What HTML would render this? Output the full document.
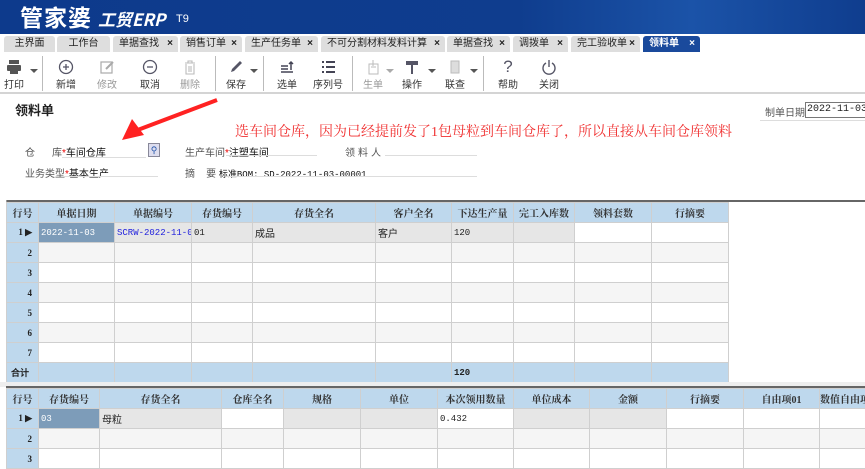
<!DOCTYPE html>
<html><head><meta charset="utf-8"><style>
*{margin:0;padding:0;box-sizing:border-box}
body{width:865px;height:452px;overflow:hidden;background:#fff;font-family:"Liberation Sans","Noto Sans CJK SC",sans-serif;font-size:11px;color:#222;position:relative}
.a{position:absolute;white-space:nowrap}
#hdr{left:0;top:0;width:865px;height:34px;background:linear-gradient(90deg,#0d3a8c 0%,#0f3d8e 60%,#1b53a8 80%,#0f3d8e 100%)}
#tabs{left:0;top:34px;width:865px;height:18px;background:#fff}
.tab{position:absolute;top:2px;height:16px;background:#dedede;border-radius:3px 3px 0 0;font-size:10px;line-height:16px;color:#222;padding-left:6px;white-space:nowrap}
.tab b{position:absolute;right:5px;top:0;font-weight:bold;font-size:10px}
.tb{position:absolute;top:57px;text-align:center;font-size:10px;color:#333;white-space:nowrap}
.tb .i{height:20px;display:flex;align-items:center;justify-content:center}
.tb .l{margin-top:3px;line-height:12px}
.sep{position:absolute;top:56px;width:1px;height:35px;background:#bbb}
.dd{position:absolute;top:69px;width:0;height:0;border-left:4px solid transparent;border-right:4px solid transparent;border-top:4px solid #555}
table{border-collapse:collapse;table-layout:fixed;position:absolute}
td{border:1px solid #cfcfcf;height:20px;font-size:9px;padding:0 2px;overflow:hidden;white-space:nowrap;font-family:"Liberation Mono","Noto Sans CJK SC",monospace}
th{background:#bed8ed;border:1px solid #cfcfcf;height:20px;font-weight:bold;color:#333;font-size:10px;font-family:"Liberation Serif","Noto Serif CJK SC",serif;white-space:nowrap;overflow:hidden}
td.n{background:#bed8ed;text-align:right;padding-right:6px;font-weight:bold;font-size:9px;font-family:"Liberation Serif",serif}
tr.g td{background:#f5f5f5}
tr.g td.n,tr.s td.n{background:#bed8ed}
tr.s td{background:#bed8ed}
.lbl{color:#555;font-size:10px}
.ul{position:absolute;height:1px;background:#ddd}
.st{color:#e00}
</style></head><body>
<div class="a" id="hdr">
<div class="a" style="left:20px;top:2px;font-size:23px;font-weight:bold;color:#fff;letter-spacing:1px;font-family:'Noto Sans CJK SC',sans-serif;line-height:28px">管家婆</div>
<div class="a" style="left:98px;top:8px;font-size:17px;font-style:italic;font-weight:bold;color:#fff;font-family:'Noto Sans CJK SC',sans-serif;line-height:22px">工贸ERP</div>
<div class="a" style="left:176px;top:13px;font-size:11px;color:#fff">T9</div>
</div>
<div class="a" id="tabs">
<div class="tab" style="left:4px;width:51px;text-align:center;padding:0">主界面</div>
<div class="tab" style="left:57px;width:53px;text-align:center;padding:0">工作台</div>
<div class="tab" style="left:113px;width:65px">单据查找<b>×</b></div>
<div class="tab" style="left:180px;width:62px">销售订单<b>×</b></div>
<div class="tab" style="left:245px;width:73px">生产任务单<b>×</b></div>
<div class="tab" style="left:321px;width:124px">不可分割材料发料计算<b>×</b></div>
<div class="tab" style="left:447px;width:63px">单据查找<b>×</b></div>
<div class="tab" style="left:513px;width:55px">调拨单<b>×</b></div>
<div class="tab" style="left:571px;width:69px">完工验收单<b>×</b></div>
<div class="tab" style="left:643px;width:57px;background:#1a4a9c;color:#fff;font-weight:bold">领料单<b>×</b></div>
</div>
<!-- toolbar -->
<div class="tb" style="left:2px;width:24px"><div class="i"><svg width="16" height="16"><rect x="3" y="1" width="10" height="4" fill="#555"/><rect x="1" y="6" width="14" height="6" rx="1" fill="#555"/><rect x="4" y="11" width="8" height="4" fill="#555"/></svg></div><div class="l">打印</div></div>
<div class="dd" style="left:30px"></div>
<div class="sep" style="left:42px"></div>
<div class="tb" style="left:53px;width:26px"><div class="i"><svg width="16" height="16"><circle cx="8" cy="8" r="6.5" fill="none" stroke="#556" stroke-width="1.3"/><path d="M8 5v6M5 8h6" stroke="#556" stroke-width="1.3"/></svg></div><div class="l">新增</div></div>
<div class="tb" style="left:94px;width:26px;color:#999"><div class="i"><svg width="16" height="16"><rect x="2" y="3" width="11" height="11" fill="none" stroke="#aaa" stroke-width="1.2"/><path d="M7 10l7-7" stroke="#aaa" stroke-width="2"/></svg></div><div class="l">修改</div></div>
<div class="tb" style="left:137px;width:26px"><div class="i"><svg width="16" height="16"><circle cx="8" cy="8" r="6.5" fill="none" stroke="#556" stroke-width="1.3"/><path d="M5 8h6" stroke="#556" stroke-width="1.3"/></svg></div><div class="l">取消</div></div>
<div class="tb" style="left:177px;width:26px;color:#999"><div class="i"><svg width="16" height="16"><path d="M3 4h10M6 4V2h4v2M4 5v10h8V5M7 7v6M9 7v6" fill="none" stroke="#bbb" stroke-width="1.1"/></svg></div><div class="l">删除</div></div>
<div class="sep" style="left:215px"></div>
<div class="tb" style="left:223px;width:26px"><div class="i"><svg width="16" height="16"><path d="M3 13l3-1 8-8-2-2-8 8z" fill="#556"/></svg></div><div class="l">保存</div></div>
<div class="dd" style="left:250px"></div>
<div class="sep" style="left:263px"></div>
<div class="tb" style="left:274px;width:26px"><div class="i"><svg width="16" height="16"><path d="M2 7h7M2 10h7M2 13h12M12 11V3M10 5l2-2 2 2" fill="none" stroke="#445" stroke-width="1.5"/></svg></div><div class="l">选单</div></div>
<div class="tb" style="left:310px;width:36px"><div class="i"><svg width="16" height="16"><path d="M2 3h2M6 3h9M2 8h2M6 8h9M2 13h2M6 13h9" stroke="#445" stroke-width="2"/></svg></div><div class="l">序列号</div></div>
<div class="sep" style="left:352px"></div>
<div class="tb" style="left:360px;width:26px;color:#999"><div class="i"><svg width="16" height="16"><rect x="4" y="5" width="9" height="10" fill="none" stroke="#bbb"/><path d="M8 1v6M6 8h5" stroke="#bbb"/></svg></div><div class="l">生单</div></div>
<div class="dd" style="left:386px;border-top-color:#aaa"></div>
<div class="tb" style="left:399px;width:26px"><div class="i"><svg width="16" height="16"><rect x="2" y="2" width="12" height="4" fill="#556"/><path d="M8 6v9" stroke="#556" stroke-width="2"/></svg></div><div class="l">操作</div></div>
<div class="dd" style="left:428px"></div>
<div class="tb" style="left:442px;width:26px"><div class="i"><svg width="16" height="16"><rect x="4" y="2" width="8" height="12" fill="#ddd" stroke="#bbb"/></svg></div><div class="l">联查</div></div>
<div class="dd" style="left:470px"></div>
<div class="sep" style="left:483px"></div>
<div class="tb" style="left:495px;width:26px"><div class="i" style="font-size:17px;color:#556">?</div><div class="l">帮助</div></div>
<div class="tb" style="left:536px;width:26px"><div class="i"><svg width="16" height="16"><path d="M5 4a6 6 0 1 0 6 0" fill="none" stroke="#556" stroke-width="1.4"/><path d="M8 1v7" stroke="#556" stroke-width="1.4"/></svg></div><div class="l">关闭</div></div>
<div class="a" style="left:0;top:92px;width:865px;height:2px;background:#d4d4d4"></div>

<div class="a" style="left:15px;top:100px;font-size:13px;font-weight:bold;color:#222">领料单</div>
<div class="a lbl" style="left:765px;top:104px">制单日期</div>
<div class="a" style="left:805px;top:102px;width:60px;height:16px;border:1px solid #777;border-right:none;background:#fff;font-family:'Liberation Mono',monospace;font-size:10px;line-height:14px;padding-left:1px">2022-11-03</div>
<div class="ul" style="left:760px;top:120px;width:105px"></div>
<div class="a" style="left:235px;top:121px;font-size:14px;color:#f03030;font-family:'Liberation Serif','Noto Serif CJK SC',serif">选车间仓库，因为已经提前发了1包母粒到车间仓库了，所以直接从车间仓库领料</div>
<svg class="a" style="left:110px;top:95px" width="115" height="50"><path d="M107 5L25 36" stroke="#f22" stroke-width="4"/><path d="M12 45L22 24L34 40Z" fill="#f22"/></svg>

<div class="a lbl" style="left:25px;top:144px">仓</div>
<div class="a lbl" style="left:52px;top:144px">库<span class="st">*</span><span style="color:#111">车间仓库</span></div>
<div class="ul" style="left:62px;top:157px;width:84px"></div>
<div class="a" style="left:148px;top:143px;width:12px;height:14px;background:#dde;border:1px solid #889;font-size:9px;text-align:center;line-height:12px;color:#25a">&#9906;</div>
<div class="a lbl" style="left:185px;top:144px">生产车间<span class="st">*</span><span style="color:#111">注塑车间</span></div>
<div class="ul" style="left:226px;top:155px;width:91px"></div>
<div class="a lbl" style="left:345px;top:144px;letter-spacing:3px">领料人</div>
<div class="ul" style="left:385px;top:155px;width:92px"></div>
<div class="a lbl" style="left:25px;top:165px">业务类型<span class="st">*</span><span style="color:#111">基本生产</span></div>
<div class="ul" style="left:62px;top:176px;width:96px"></div>
<div class="a lbl" style="left:185px;top:165px">摘&nbsp;&nbsp;&nbsp;&nbsp;要 <span style="color:#111;font-family:'Liberation Mono','Noto Sans CJK SC',monospace;font-size:9px">标准BOM: SD-2022-11-03-00001</span></div>
<div class="ul" style="left:226px;top:176px;width:251px"></div>

<div class="a" style="left:6px;top:200px;width:859px;height:2px;background:#666"></div>
<div class="a" style="left:6px;top:200px;width:1px;height:182px;background:#999"></div>
<table style="left:6px;top:202px;width:722px">
<colgroup><col style="width:32px"><col style="width:76px"><col style="width:77px"><col style="width:61px"><col style="width:123px"><col style="width:76px"><col style="width:62px"><col style="width:61px"><col style="width:77px"><col style="width:77px"></colgroup>
<tr><th>行号</th><th>单据日期</th><th>单据编号</th><th>存货编号</th><th>存货全名</th><th>客户全名</th><th>下达生产量</th><th>完工入库数</th><th>领料套数</th><th>行摘要</th></tr>
<tr><td class="n">1 ▶</td><td style="background:#7d9cb9;color:#fff">2022-11-03</td><td style="background:#e6e6e6;color:#22d">SCRW-2022-11-03-(</td><td style="background:#e6e6e6">01</td><td style="background:#e6e6e6;font-size:10px">成品</td><td style="background:#e6e6e6;font-size:10px">客户</td><td style="background:#e6e6e6">120</td><td style="background:#e6e6e6"></td><td></td><td></td></tr>
<tr class="g"><td class="n">2</td><td></td><td></td><td></td><td></td><td></td><td></td><td></td><td></td><td></td></tr>
<tr><td class="n">3</td><td></td><td></td><td></td><td></td><td></td><td></td><td></td><td></td><td></td></tr>
<tr class="g"><td class="n">4</td><td></td><td></td><td></td><td></td><td></td><td></td><td></td><td></td><td></td></tr>
<tr><td class="n">5</td><td></td><td></td><td></td><td></td><td></td><td></td><td></td><td></td><td></td></tr>
<tr class="g"><td class="n">6</td><td></td><td></td><td></td><td></td><td></td><td></td><td></td><td></td><td></td></tr>
<tr><td class="n">7</td><td></td><td></td><td></td><td></td><td></td><td></td><td></td><td></td><td></td></tr>
<tr class="s"><td class="n" style="text-align:left;padding-left:4px">合计</td><td></td><td></td><td></td><td></td><td></td><td style="font-weight:bold">120</td><td></td><td></td><td></td></tr>
</table>
<div class="a" style="left:0;top:382px;width:865px;height:5px;background:#eee"></div>
<div class="a" style="left:6px;top:386px;width:859px;height:2px;background:#666"></div>
<table style="left:6px;top:388px;width:900px">
<colgroup><col style="width:32px"><col style="width:61px"><col style="width:122px"><col style="width:62px"><col style="width:77px"><col style="width:77px"><col style="width:76px"><col style="width:76px"><col style="width:77px"><col style="width:77px"><col style="width:76px"><col style="width:87px"></colgroup>
<tr><th>行号</th><th>存货编号</th><th>存货全名</th><th>仓库全名</th><th>规格</th><th>单位</th><th>本次领用数量</th><th>单位成本</th><th>金额</th><th>行摘要</th><th>自由项01</th><th style="text-align:left">数值自由项</th></tr>
<tr><td class="n">1 ▶</td><td style="background:#7d9cb9;color:#fff">03</td><td style="background:#e6e6e6;font-size:10px">母粒</td><td></td><td style="background:#e6e6e6"></td><td style="background:#e6e6e6"></td><td>0.432</td><td style="background:#e6e6e6"></td><td style="background:#e6e6e6"></td><td></td><td></td><td></td></tr>
<tr class="g"><td class="n">2</td><td></td><td></td><td></td><td></td><td></td><td></td><td></td><td></td><td></td><td></td><td></td></tr>
<tr><td class="n">3</td><td></td><td></td><td></td><td></td><td></td><td></td><td></td><td></td><td></td><td></td><td></td></tr>
</table>
</body></html>
